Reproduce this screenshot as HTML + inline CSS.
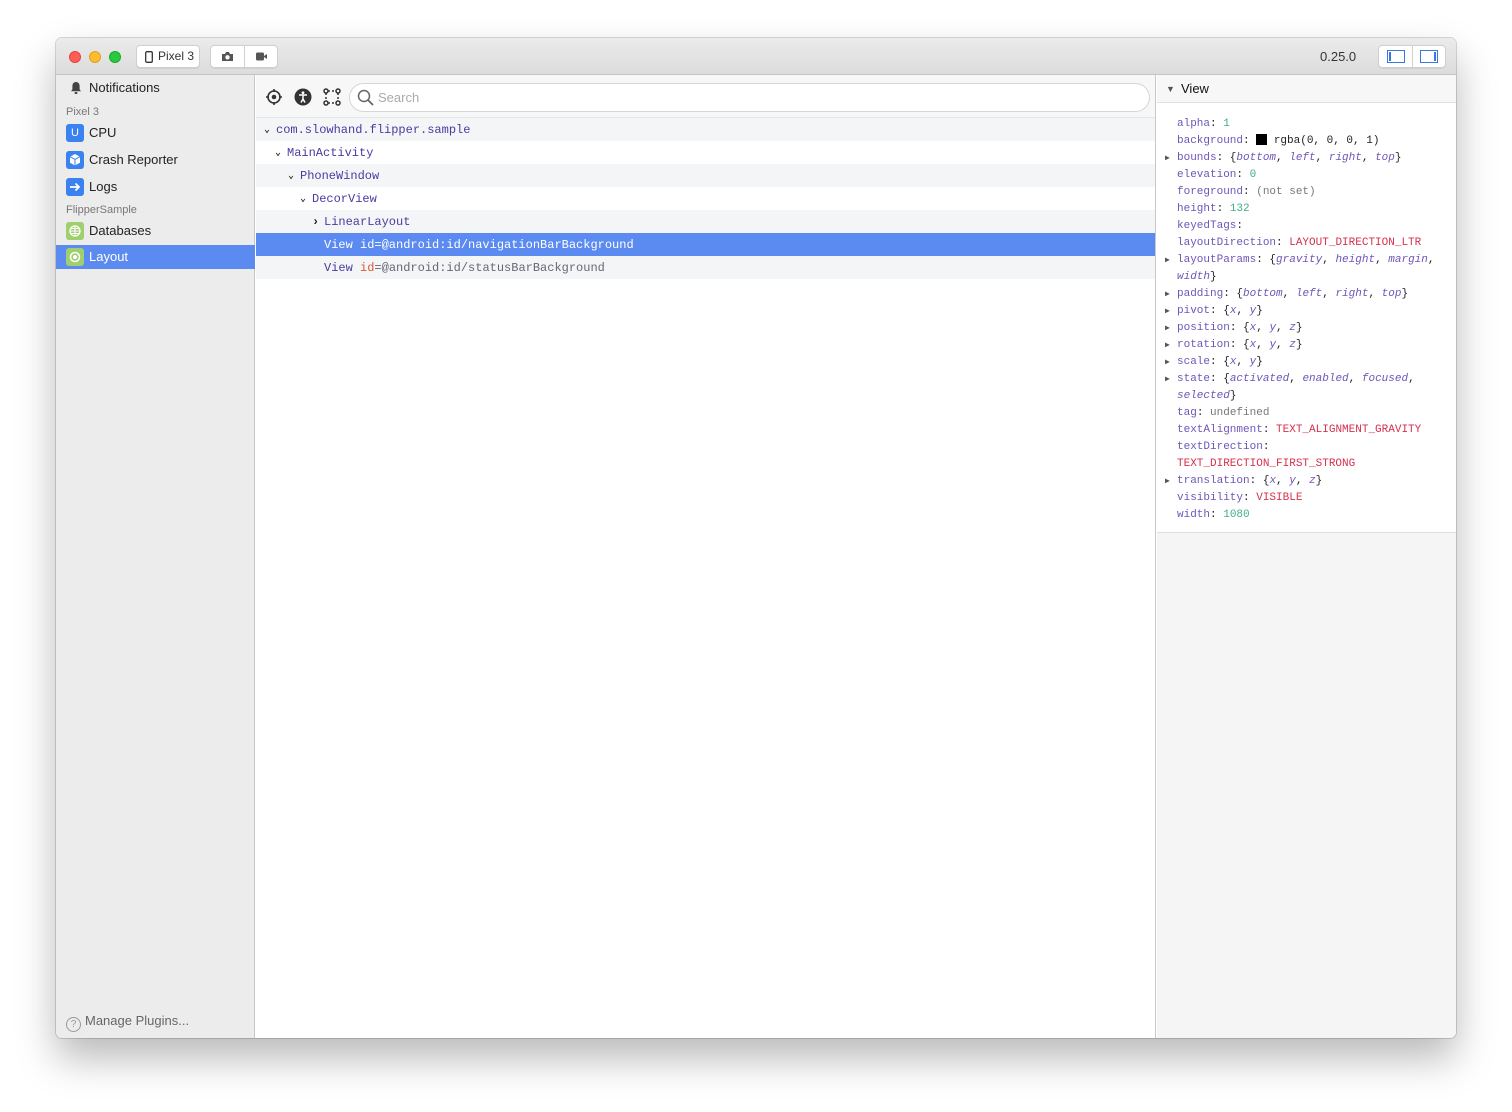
<!DOCTYPE html>
<html><head><meta charset="utf-8"><style>
*{box-sizing:border-box;margin:0;padding:0}
body{width:1512px;height:1112px;background:#fff;font-family:"Liberation Sans",sans-serif;position:relative;overflow:hidden}
.win{position:absolute;left:56px;top:38px;width:1400px;height:1000px;border-radius:6px;overflow:hidden;box-shadow:0 20px 40px rgba(0,0,0,.28),0 0 0 1px rgba(0,0,0,.15);background:#fff}
.title{position:absolute;left:0;top:0;width:1400px;height:37px;background:linear-gradient(#ebebeb,#dcdcdc);border-bottom:1px solid #c4c4c4}
.dot{position:absolute;top:13px;width:12px;height:12px;border-radius:50%}
.btn{position:absolute;top:7px;height:23px;background:#fff;border:1px solid #cfcfcf;border-radius:4px;font-size:12px;color:#333;box-shadow:0 1px 0 rgba(0,0,0,.05)}
.side{position:absolute;left:0;top:37px;width:199px;height:963px;background:#ececec;border-right:1px solid #c8c8c8}
.si{position:absolute;left:0;width:199px;height:24px;font-size:13px;color:#222;line-height:24px;padding-left:33px}
.ic{position:absolute;left:10px;top:3px;width:18px;height:18px;border-radius:3px}
.sh{position:absolute;left:10px;font-size:11px;color:#777}
.mid{position:absolute;left:200px;top:37px;width:900px;height:963px;background:#fff;border-right:1px solid #c8c8c8}
.tb{height:43px;border-bottom:1px solid #e4e4e4;background:#f7f7f7;position:relative}
.row{height:23px;font-family:"Liberation Mono",monospace;font-size:12px;color:#4b3aa0;line-height:23px;padding-top:1px;position:relative;white-space:pre}
.g{background:#f4f5f7}
.sel{background:#5b8af0;color:#fff}
.chev{position:absolute;top:1px;font-size:10px;color:#222;font-weight:bold}
.right{position:absolute;left:1101px;top:37px;width:299px;height:963px;background:#f5f5f5}
.rh{height:28px;background:#f7f7f7;border-bottom:1px solid #e0e0e0;font-size:13px;line-height:28px;padding-left:24px;color:#111;position:relative}
.props{background:#fff;height:430px;border-bottom:1px solid #e0e0e0;padding-top:13px;font-family:"Liberation Mono",monospace;font-size:11px}
.p{height:17px;line-height:17px;padding-left:20px;position:relative;color:#6e56b8;white-space:pre}
.p .t{position:absolute;left:8px;font-size:8px;color:#555}
.n{color:#3fae8a}.s{color:#d6304c}.u{color:#777}.i{font-style:italic;color:#6e56b8}.k{color:#222}
</style></head><body>
<div class="win">
 <div class="title">
  <div class="dot" style="left:13px;background:#fe5f57;border:1px solid #e0443e"></div>
  <div class="dot" style="left:33px;background:#febc2e;border:1px solid #dea123"></div>
  <div class="dot" style="left:53px;background:#28c840;border:1px solid #1aab29"></div>
  <div class="btn" style="left:80px;width:64px;line-height:21px;padding-left:21px">
   <svg style="position:absolute;left:8px;top:5px" width="8" height="12" viewBox="0 0 8 12"><rect x="0.7" y="0.7" width="6.6" height="10.6" rx="1.3" fill="none" stroke="#333" stroke-width="1.3"/></svg>Pixel 3</div>
  <div class="btn" style="left:154px;width:68px">
   <div style="position:absolute;left:33px;top:0;width:1px;height:21px;background:#d0d0d0"></div>
   <svg style="position:absolute;left:10px;top:5px" width="13" height="11" viewBox="0 0 13 11"><path d="M1 3h3l1-2h3l1 2h3v7H1z" fill="#555"/><circle cx="6.5" cy="6.3" r="2.2" fill="#fff"/></svg>
   <svg style="position:absolute;left:44px;top:5px" width="13" height="11" viewBox="0 0 13 11"><rect x="1" y="1.5" width="8" height="8" rx="1.5" fill="#555"/><path d="M9 5l3-2v5l-3-2z" fill="#555"/></svg>
  </div>
  <div style="position:absolute;left:1264px;top:11px;font-size:13px;color:#333">0.25.0</div>
  <div class="btn" style="left:1322px;width:68px">
   <div style="position:absolute;left:33px;top:0;width:1px;height:21px;background:#d0d0d0"></div>
   <svg style="position:absolute;left:8px;top:4px" width="18" height="13"><rect x="0.5" y="0.5" width="17" height="12" fill="none" stroke="#3a78e0"/><rect x="2" y="2" width="2" height="9" fill="#3a78e0"/></svg>
   <svg style="position:absolute;left:41px;top:4px" width="18" height="13"><rect x="0.5" y="0.5" width="17" height="12" fill="none" stroke="#3a78e0"/><rect x="14" y="2" width="2" height="9" fill="#3a78e0"/></svg>
  </div>
 </div>
 <div class="side">
  <div class="si" style="top:1px"><svg class="ic" viewBox="0 0 18 18" style="left:11px"><path d="M9 3c-2.5 0-3.6 2-3.6 4v3.4L4 12.3h10l-1.4-1.9V7c0-2-1.1-4-3.6-4z" fill="#444"/><rect x="7.5" y="13" width="3" height="2" rx="1" fill="#444"/></svg>Notifications</div>
  <div class="sh" style="top:31px">Pixel 3</div>
  <div class="si" style="top:46px"><div class="ic" style="background:#3b82f0;color:#fff;font-size:11px;line-height:18px;text-align:center">U</div>CPU</div>
  <div class="si" style="top:73px"><div class="ic" style="background:#3b82f0"><svg width="18" height="18"><path d="M9 3l5 2.7v6L9 14.5 4 11.7v-6z" fill="#fff"/><path d="M4 5.7L9 8.4l5-2.7M9 8.4v6" stroke="#3b82f0" fill="none"/></svg></div>Crash Reporter</div>
  <div class="si" style="top:100px"><div class="ic" style="background:#3b82f0"><svg width="18" height="18"><path d="M4 9h9M9.5 5.5L13 9l-3.5 3.5" stroke="#fff" stroke-width="1.8" fill="none"/></svg></div>Logs</div>
  <div class="sh" style="top:129px">FlipperSample</div>
  <div class="si" style="top:144px"><div class="ic" style="background:#9fcf6f"><svg width="18" height="18"><circle cx="9" cy="9" r="5" fill="none" stroke="#fff" stroke-width="1.3"/><path d="M4 9h10M9 4v10M5 6.5h8M5 11.5h8" stroke="#fff"/></svg></div>Databases</div>
  <div class="si" style="top:170px;background:#5b8af0;color:#fff"><div class="ic" style="background:#9fcf6f"><svg width="18" height="18"><circle cx="9" cy="9" r="4.5" fill="none" stroke="#fff" stroke-width="1.5"/><circle cx="9" cy="9" r="2" fill="#fff"/></svg></div>Layout</div>
  <div style="position:absolute;left:10px;top:938px;font-size:13px;color:#666"><span style="display:inline-block;width:15px;height:15px;border:1px solid #999;border-radius:50%;font-size:10px;text-align:center;line-height:13px;color:#999;vertical-align:-2px;margin-right:4px">?</span>Manage Plugins...</div>
 </div>
 <div class="mid">
  <div class="tb">
   <svg style="position:absolute;left:9px;top:13px" width="18" height="18" viewBox="0 0 18 18"><circle cx="9" cy="9" r="6" fill="none" stroke="#333" stroke-width="1.6"/><circle cx="9" cy="9" r="2.3" fill="#333"/><path d="M9 1v3M9 14v3M1 9h3M14 9h3" stroke="#333" stroke-width="1.6"/></svg>
   <svg style="position:absolute;left:38px;top:13px" width="18" height="18" viewBox="0 0 18 18"><circle cx="9" cy="9" r="8.5" fill="#333"/><circle cx="9" cy="4.8" r="1.4" fill="#fff"/><path d="M5 7h8M9 7v4M9 11l-2 3.5M9 11l2 3.5" stroke="#fff" stroke-width="1.5"/></svg>
   <svg style="position:absolute;left:67px;top:13px" width="18" height="18" viewBox="0 0 18 18"><g fill="none" stroke="#333" stroke-width="1.5"><circle cx="3" cy="3" r="2"/><circle cx="15" cy="3" r="2"/><circle cx="3" cy="15" r="2"/><circle cx="15" cy="15" r="2"/><path d="M5 3h8M3 5v8M15 5v8M5 15h8" stroke-dasharray="2 2"/></g></svg>
   <div style="position:absolute;left:93px;top:8px;width:801px;height:29px;border:1px solid #d6d6d6;border-radius:15px;background:#fff;font-size:13px;color:#aaa;line-height:27px;padding-left:28px">
    <svg style="position:absolute;left:7px;top:5px" width="17" height="17"><circle cx="7" cy="7" r="5.5" fill="none" stroke="#666" stroke-width="1.5"/><path d="M11 11l5 5" stroke="#666" stroke-width="1.8"/></svg>Search</div>
  </div>
  <div class="row g" style="padding-left:20px"><span class="chev" style="left:8px">⌄</span>com.slowhand.flipper.sample</div>
  <div class="row" style="padding-left:31px"><span class="chev" style="left:19px">⌄</span>MainActivity</div>
  <div class="row g" style="padding-left:44px"><span class="chev" style="left:32px">⌄</span>PhoneWindow</div>
  <div class="row" style="padding-left:56px"><span class="chev" style="left:44px">⌄</span>DecorView</div>
  <div class="row g" style="padding-left:68px"><span class="chev" style="left:56px;font-size:12px">›</span>LinearLayout</div>
  <div class="row sel" style="padding-left:68px">View id=@android:id/navigationBarBackground</div>
  <div class="row g" style="padding-left:68px">View <span style="color:#e0583a">id</span><span style="color:#667">=@android:id/statusBarBackground</span></div>
 </div>
 <div class="right">
  <div class="rh"><span style="position:absolute;left:9px;top:0;font-size:9px;color:#555">▼</span>View</div>
  <div class="props">
   <div class="p">alpha<span class="k">: </span><span class="n">1</span></div>
   <div class="p">background<span class="k">: </span><span style="display:inline-block;width:11px;height:11px;background:#000;vertical-align:-2px"></span><span class="k"> rgba(0, 0, 0, 1)</span></div>
   <div class="p"><span class="t">▶</span>bounds<span class="k">: {</span><span class="i">bottom</span><span class="k">, </span><span class="i">left</span><span class="k">, </span><span class="i">right</span><span class="k">, </span><span class="i">top</span><span class="k">}</span></div>
   <div class="p">elevation<span class="k">: </span><span class="n">0</span></div>
   <div class="p">foreground<span class="k">: </span><span class="u">(not set)</span></div>
   <div class="p">height<span class="k">: </span><span class="n">132</span></div>
   <div class="p">keyedTags<span class="k">:</span></div>
   <div class="p">layoutDirection<span class="k">: </span><span class="s">LAYOUT_DIRECTION_LTR</span></div>
   <div class="p"><span class="t">▶</span>layoutParams<span class="k">: {</span><span class="i">gravity</span><span class="k">, </span><span class="i">height</span><span class="k">, </span><span class="i">margin</span><span class="k">,</span></div>
   <div class="p"><span class="i">width</span><span class="k">}</span></div>
   <div class="p"><span class="t">▶</span>padding<span class="k">: {</span><span class="i">bottom</span><span class="k">, </span><span class="i">left</span><span class="k">, </span><span class="i">right</span><span class="k">, </span><span class="i">top</span><span class="k">}</span></div>
   <div class="p"><span class="t">▶</span>pivot<span class="k">: {</span><span class="i">x</span><span class="k">, </span><span class="i">y</span><span class="k">}</span></div>
   <div class="p"><span class="t">▶</span>position<span class="k">: {</span><span class="i">x</span><span class="k">, </span><span class="i">y</span><span class="k">, </span><span class="i">z</span><span class="k">}</span></div>
   <div class="p"><span class="t">▶</span>rotation<span class="k">: {</span><span class="i">x</span><span class="k">, </span><span class="i">y</span><span class="k">, </span><span class="i">z</span><span class="k">}</span></div>
   <div class="p"><span class="t">▶</span>scale<span class="k">: {</span><span class="i">x</span><span class="k">, </span><span class="i">y</span><span class="k">}</span></div>
   <div class="p"><span class="t">▶</span>state<span class="k">: {</span><span class="i">activated</span><span class="k">, </span><span class="i">enabled</span><span class="k">, </span><span class="i">focused</span><span class="k">,</span></div>
   <div class="p"><span class="i">selected</span><span class="k">}</span></div>
   <div class="p">tag<span class="k">: </span><span class="u">undefined</span></div>
   <div class="p">textAlignment<span class="k">: </span><span class="s">TEXT_ALIGNMENT_GRAVITY</span></div>
   <div class="p">textDirection<span class="k">:</span></div>
   <div class="p"><span class="s">TEXT_DIRECTION_FIRST_STRONG</span></div>
   <div class="p"><span class="t">▶</span>translation<span class="k">: {</span><span class="i">x</span><span class="k">, </span><span class="i">y</span><span class="k">, </span><span class="i">z</span><span class="k">}</span></div>
   <div class="p">visibility<span class="k">: </span><span class="s">VISIBLE</span></div>
   <div class="p">width<span class="k">: </span><span class="n">1080</span></div>
  </div>
 </div>
</div>
</body></html>
